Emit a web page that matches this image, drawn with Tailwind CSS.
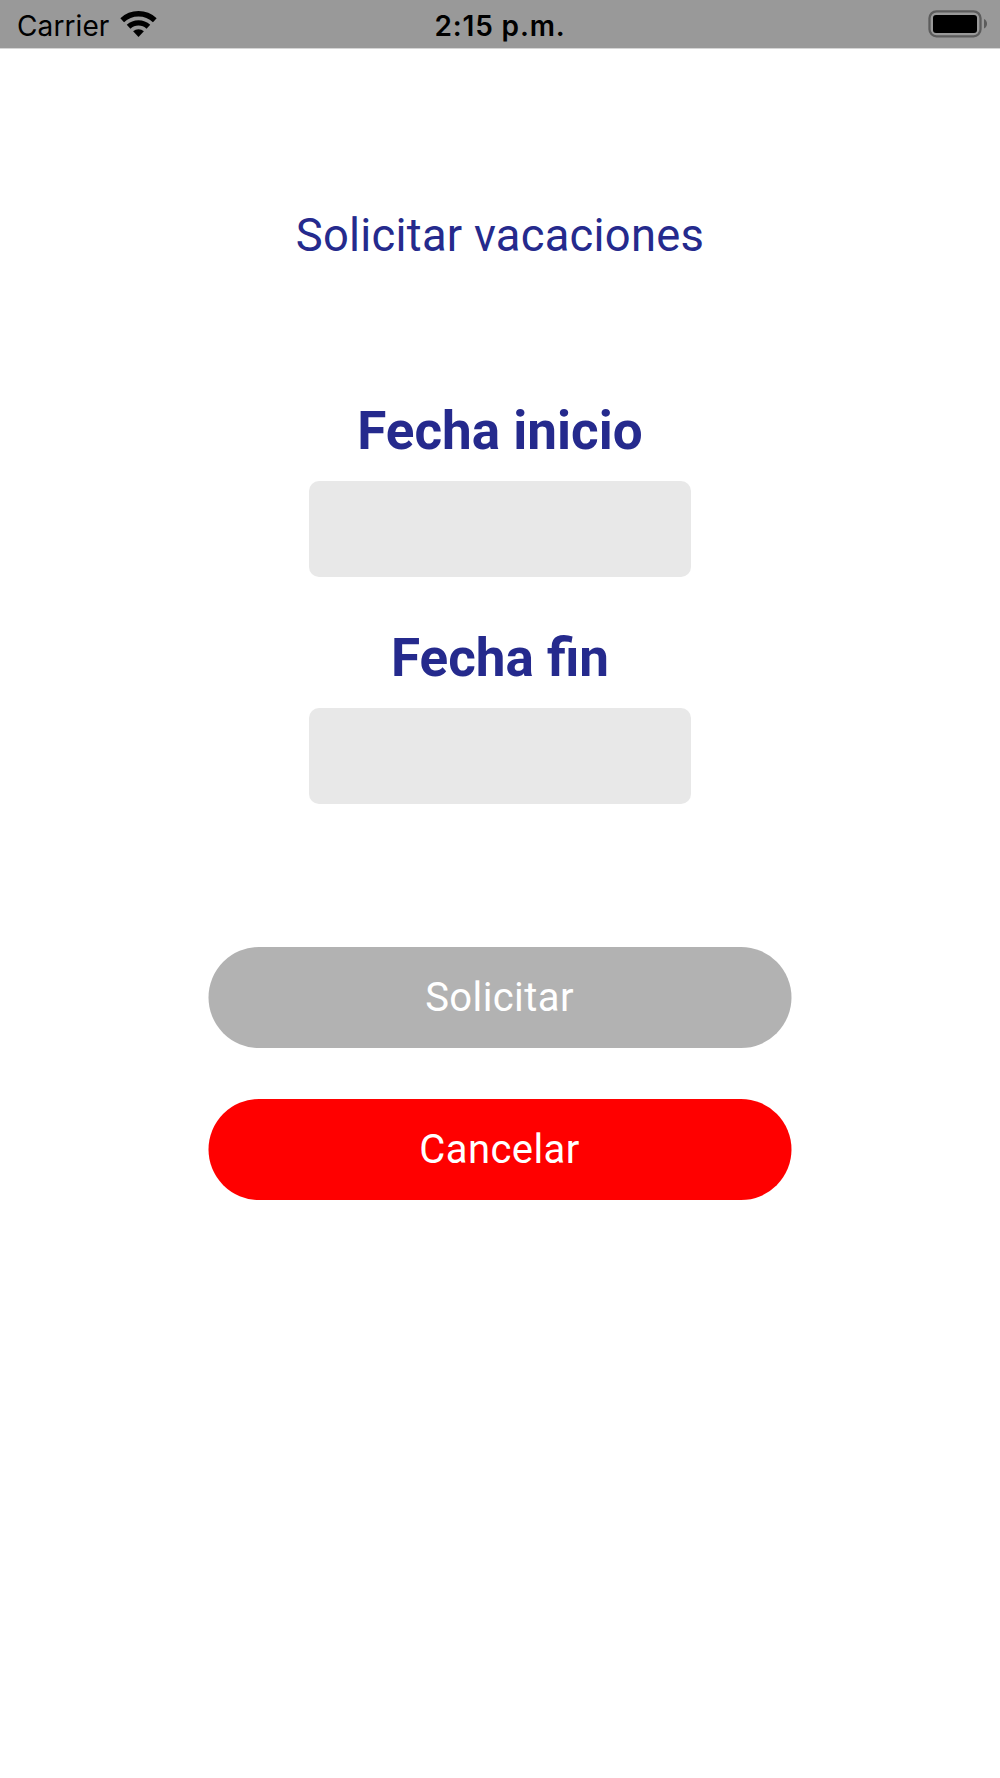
<!DOCTYPE html>
<html lang="es">
<head>
<meta charset="utf-8">
<title>Solicitar vacaciones</title>
<script src="https://cdn.jsdelivr.net/npm/@tailwindcss/browser@4"></script>
</head>
<body class="bg-white">
<div class="flex h-[1778px] w-[1000px] flex-col items-center overflow-hidden font-['Roboto',sans-serif] text-[#252a8d]">
  <header class="grid h-[49px] w-full shrink-0 grid-cols-[1fr_auto_1fr] items-center border-b border-[#d5d5d5] bg-[#999999] pr-[12px] pb-[2px] pl-[17px] font-['Inter',sans-serif] text-[28px] leading-[46px] text-black">
    <div class="flex items-center gap-[11px]">
      <span class="translate-y-px pt-[2px] tracking-[0.1px]">Carrier</span>
      <svg class="h-[28px] w-[37px]" viewBox="0 0 37 28" fill="none" stroke="#000" stroke-width="5.400">
        <path d="M2.200 10.200a23.800 23.800 0 0 1 32.600 0"/>
        <path d="M8.600 16.700a14.600 14.600 0 0 1 19.800 0"/>
        <path d="M13.100 21.300a8 8 0 0 1 10.800 0L18.500 27Z" fill="#000" stroke="none"/>
      </svg>
    </div>
    <span class="translate-y-px pt-[2px] pr-[5px] text-center font-semibold tracking-[0.85px]">2:15 p.m.</span>
    <svg class="h-[28px] w-[60px] justify-self-end" viewBox="0 0 60 28">
      <rect x="1.500" y="1.300" width="51" height="25" rx="7" fill="none" stroke="#5c5c5c" stroke-width="2.300"/>
      <rect x="5" y="5" width="44" height="18" rx="3" fill="#000"/>
      <path d="M56 9c4 1.500 4 8 0 9.500Z" fill="#5c5c5c"/>
    </svg>
  </header>
  <main class="flex flex-col items-center">
    <h1 class="mt-[160px] h-[53px] text-[45.330px] leading-[54px] tracking-[0.25px]">Solicitar vacaciones</h1>
    <label class="mt-[138px] flex flex-col items-center text-[53px] leading-[62px] font-bold">
      Fecha inicio
      <input class="mt-[19px] h-[96px] w-[382px] rounded-[10px] bg-[#e8e8e8]">
    </label>
    <label class="mt-[50px] flex flex-col items-center text-[53px] leading-[62px] font-bold">
      Fecha fin
      <input class="mt-[19px] h-[96px] w-[382px] rounded-[10px] bg-[#e8e8e8]">
    </label>
    <button class="mt-[143px] h-[101px] w-[583px] -translate-x-[0.500px] rounded-full bg-[#b2b2b2] text-[40px] tracking-[0.4px] text-white">Solicitar</button>
    <button class="mt-[51px] h-[101px] w-[583px] -translate-x-[0.500px] rounded-full bg-[#ff0000] text-[40px] tracking-[0.4px] text-white">Cancelar</button>
  </main>
</div>
</body>
</html>
